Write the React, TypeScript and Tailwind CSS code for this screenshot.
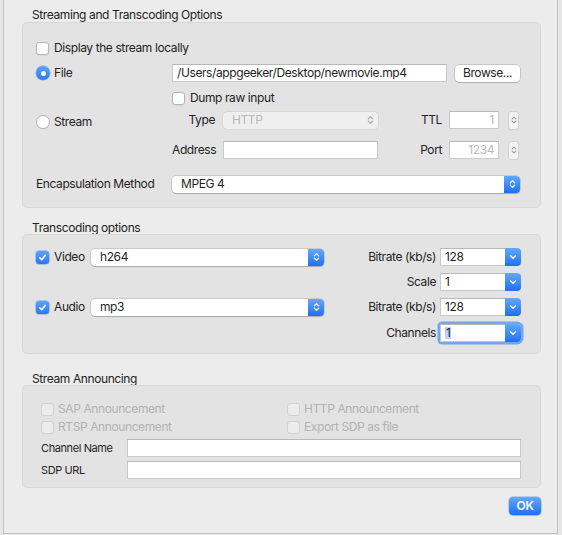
import React from "react";

const UpDown = ({ color = "white", w = 7, h = 10 }: { color?: string; w?: number; h?: number }) => (
  <svg width={w} height={h} viewBox="0 0 7 10" fill="none">
    <path d="M1.3 3.8 L3.5 1.6 L5.7 3.8" stroke={color} strokeWidth="1.2" strokeLinecap="round" strokeLinejoin="round" />
    <path d="M1.3 6.2 L3.5 8.4 L5.7 6.2" stroke={color} strokeWidth="1.2" strokeLinecap="round" strokeLinejoin="round" />
  </svg>
);

const Down = () => (
  <svg width="8" height="6" viewBox="0 0 8 6" fill="none">
    <path d="M1.5 1.8 L4 4.2 L6.5 1.8" stroke="white" strokeWidth="1.3" strokeLinecap="round" strokeLinejoin="round" />
  </svg>
);

function Checkbox({ checked = false, disabled = false }: { checked?: boolean; disabled?: boolean }) {
  if (checked) {
    return (
      <span className="w-[13px] h-[13px] shrink-0 rounded-[3px] bg-linear-to-b from-[#5aa2fb] to-[#2a78f3] shadow-[0_0_0_0.5px_rgba(20,80,200,0.5)] flex items-center justify-center">
        <svg width="9" height="9" viewBox="0 0 10 10" fill="none">
          <path d="M2 5.3 L4.2 7.5 L8.1 2.6" stroke="white" strokeWidth="1.8" strokeLinecap="round" strokeLinejoin="round" />
        </svg>
      </span>
    );
  }
  return (
    <span
      className={
        disabled
          ? "w-[13px] h-[13px] shrink-0 rounded-[3px] bg-[#ececec] border border-[#d2d2d2]"
          : "w-[13px] h-[13px] shrink-0 rounded-[3px] bg-white border border-[#b4b4b4] shadow-[0_0.5px_0.5px_rgba(0,0,0,0.08)]"
      }
    />
  );
}

function Radio({ on = false }: { on?: boolean }) {
  return on ? (
    <span className="w-[14px] h-[14px] shrink-0 rounded-full bg-linear-to-b from-[#5aa2fb] to-[#2a78f3] shadow-[0_0_0_0.5px_rgba(20,80,200,0.5)] flex items-center justify-center">
      <span className="w-[5px] h-[5px] rounded-full bg-white" />
    </span>
  ) : (
    <span className="w-[14px] h-[14px] shrink-0 rounded-full bg-white border border-[#b4b4b4] shadow-[0_0.5px_0.5px_rgba(0,0,0,0.08)]" />
  );
}

function TextField({ value = "", w, placeholder, right = false }: { value?: string; w: string; placeholder?: string; right?: boolean }) {
  return (
    <div
      className={`${w} h-[18px] shrink-0 bg-white border border-[#c9c9c9] border-t-[#b8b8b8] flex items-center px-[4px] leading-none ${right ? "justify-end" : ""}`}
    >
      {value && <span className="text-[#1e1e1e]">{value}</span>}
      {placeholder && <span className="text-[#b9b9b9]">{placeholder}</span>}
    </div>
  );
}

function Popup({ value, w }: { value: string; w: string }) {
  return (
    <div className={`${w} h-[17px] shrink-0 bg-white rounded-[4px] shadow-[0_0_0_0.5px_rgba(0,0,0,0.22),0_1px_1px_rgba(0,0,0,0.16)] flex items-center`}>
      <span className="flex-1 pl-[9px] text-[#1e1e1e] leading-none">{value}</span>
      <span className="w-[16px] h-full rounded-r-[4px] bg-linear-to-b from-[#63a8fb] to-[#1e6ff0] flex items-center justify-center">
        <UpDown />
      </span>
    </div>
  );
}

function Combo({ value, focused = false }: { value: string; focused?: boolean }) {
  return (
    <div
      className={`w-[81px] h-[18px] shrink-0 flex items-stretch rounded-r-[4px] ${
        focused ? "shadow-[0_0_0_2.5px_rgba(80,145,235,0.75)] rounded-l-[2px]" : ""
      }`}
    >
      <div className="flex-1 bg-white border border-[#c9c9c9] border-t-[#b8b8b8] border-r-0 flex items-center pl-[4px] leading-none text-[#1e1e1e]">
        {focused ? <span className="bg-[#b5d5fd] px-[1px]">{value}</span> : value}
      </div>
      <span className="w-[16px] rounded-r-[4px] bg-linear-to-b from-[#63a8fb] to-[#1e6ff0] flex items-center justify-center">
        <Down />
      </span>
    </div>
  );
}

function Stepper() {
  return (
    <span className="w-[11px] h-[19px] shrink-0 rounded-[3px] bg-[#f3f3f3] border border-[#d0d0d0] flex items-center justify-center">
      <UpDown color="#9a9a9a" w={6} h={10} />
    </span>
  );
}

function Group({ h, children }: { h: string; children: React.ReactNode }) {
  return (
    <div className={`ml-[18px] w-[519px] ${h} shrink-0 rounded-[5px] bg-[#e3e3e3] border border-[#d8d8d8] flex flex-col`}>
      {children}
    </div>
  );
}

export default function App() {
  return (
    <div className="w-[562px] h-[535px] bg-[#e6e6e6] pl-[3px] font-['Inter','Liberation_Sans',sans-serif] text-[12px] tracking-[-0.4px] text-[#232323] antialiased">
      <div className="w-[555px] h-[534px] bg-[#ececec] border-l border-r border-b border-[#c2c2c2] flex flex-col">
        {/* Streaming and Transcoding Options */}
        <div className="h-[22px] pl-[28px] pt-[8px] leading-[14px] shrink-0">Streaming and Transcoding Options</div>
        <Group h="h-[186px]">
          <div className="mt-[16px] h-[18px] pl-[13px] flex items-center gap-[5px]">
            <Checkbox />
            <span>Display the stream locally</span>
          </div>
          <div className="mt-[7px] h-[18px] pl-[13px] flex items-center">
            <div className="w-[136px] flex items-center gap-[4px]">
              <Radio on />
              <span>File</span>
            </div>
            <TextField w="w-[275px]" value="/Users/appgeeker/Desktop/newmovie.mp4" />
            <div className="ml-[8px] w-[65px] h-[17px] rounded-[4px] bg-white shadow-[0_0_0_0.5px_rgba(0,0,0,0.25),0_1px_1px_rgba(0,0,0,0.12)] flex items-center justify-center leading-none">
              Browse...
            </div>
          </div>
          <div className="mt-[7px] pl-[13px] flex">
            <div className="w-[136px] pt-[24px]">
              <div className="h-[18px] flex items-center gap-[4px]">
                <Radio />
                <span>Stream</span>
              </div>
            </div>
            <div className="flex flex-col">
              <div className="h-[18px] flex items-center gap-[5px]">
                <Checkbox />
                <span>Dump raw input</span>
              </div>
              <div className="mt-[4px] h-[18px] flex items-center">
                <span className="w-[43px] text-right">Type</span>
                <div className="ml-[8px] w-[155px] h-[17px] rounded-[4px] bg-[#efefef] shadow-[0_0_0_0.5px_rgba(0,0,0,0.1)] flex items-center">
                  <span className="flex-1 pl-[9px] text-[#b7b7b7] leading-none">HTTP</span>
                  <span className="w-[16px] flex items-center justify-center">
                    <UpDown color="#a8a8a8" />
                  </span>
                </div>
                <span className="w-[64px] text-right">TTL</span>
                <div className="ml-[7px]">
                  <TextField w="w-[50px]" placeholder="1" right />
                </div>
                <div className="ml-[9px]">
                  <Stepper />
                </div>
              </div>
              <div className="mt-[12px] h-[18px] flex items-center">
                <span className="w-[43px] text-right">Address</span>
                <div className="ml-[8px]">
                  <TextField w="w-[155px]" />
                </div>
                <span className="w-[64px] text-right">Port</span>
                <div className="ml-[7px]">
                  <TextField w="w-[50px]" placeholder="1234" right />
                </div>
                <div className="ml-[9px]">
                  <Stepper />
                </div>
              </div>
            </div>
          </div>
          <div className="mt-[16px] h-[18px] pl-[13px] flex items-center">
            <span className="w-[136px]">Encapsulation Method</span>
            <Popup w="w-[348px]" value="MPEG 4" />
          </div>
        </Group>

        {/* Transcoding options */}
        <div className="h-[26px] pl-[28px] pt-[13px] leading-[14px] shrink-0">Transcoding options</div>
        <Group h="h-[120px]">
          <div className="mt-[13px] pl-[13px] flex flex-col">
            <div className="h-[18px] flex items-center">
              <div className="w-[55px] flex items-center gap-[5px]">
                <Checkbox checked />
                <span>Video</span>
              </div>
              <Popup w="w-[233px]" value="h264" />
              <span className="w-[112px] text-right">Bitrate (kb/s)</span>
              <div className="ml-[4px]">
                <Combo value="128" />
              </div>
            </div>
            <div className="mt-[7px] h-[18px] flex items-center">
              <div className="w-[288px]" />
              <span className="w-[112px] text-right">Scale</span>
              <div className="ml-[4px]">
                <Combo value="1" />
              </div>
            </div>
            <div className="mt-[7px] h-[18px] flex items-center">
              <div className="w-[55px] flex items-center gap-[5px]">
                <Checkbox checked />
                <span>Audio</span>
              </div>
              <Popup w="w-[233px]" value="mp3" />
              <span className="w-[112px] text-right">Bitrate (kb/s)</span>
              <div className="ml-[4px]">
                <Combo value="128" />
              </div>
            </div>
            <div className="mt-[8px] h-[18px] flex items-center">
              <div className="w-[288px]" />
              <span className="w-[112px] text-right">Channels</span>
              <div className="ml-[4px]">
                <Combo value="1" focused />
              </div>
            </div>
          </div>
        </Group>

        {/* Stream Announcing */}
        <div className="h-[31px] pl-[28px] pt-[18px] leading-[14px] shrink-0">Stream Announcing</div>
        <Group h="h-[103px]">
          <div className="mt-[14px] pl-[18px] flex flex-col">
            <div className="h-[18px] flex items-center text-[#b2b2b2]">
              <div className="w-[246px] flex items-center gap-[4px]">
                <Checkbox disabled />
                <span>SAP Announcement</span>
              </div>
              <div className="flex items-center gap-[4px]">
                <Checkbox disabled />
                <span>HTTP Announcement</span>
              </div>
            </div>
            <div className="h-[18px] flex items-center text-[#b2b2b2]">
              <div className="w-[246px] flex items-center gap-[4px]">
                <Checkbox disabled />
                <span>RTSP Announcement</span>
              </div>
              <div className="flex items-center gap-[4px]">
                <Checkbox disabled />
                <span>Export SDP as file</span>
              </div>
            </div>
            <div className="mt-[3px] h-[18px] flex items-center">
              <span className="w-[86px] text-[11px]">Channel Name</span>
              <TextField w="w-[394px]" />
            </div>
            <div className="mt-[4px] h-[18px] flex items-center">
              <span className="w-[86px] text-[11px]">SDP URL</span>
              <TextField w="w-[394px]" />
            </div>
          </div>
        </Group>

        <div className="mt-[9px] ml-[505px] w-[32px] h-[18px] rounded-[4px] bg-linear-to-b from-[#63a8fb] to-[#1e6ff0] shadow-[0_0_0_0.5px_rgba(20,80,200,0.4),0_1px_1px_rgba(0,0,0,0.12)] flex items-center justify-center text-white font-semibold leading-none">
          OK
        </div>
      </div>
    </div>
  );
}
